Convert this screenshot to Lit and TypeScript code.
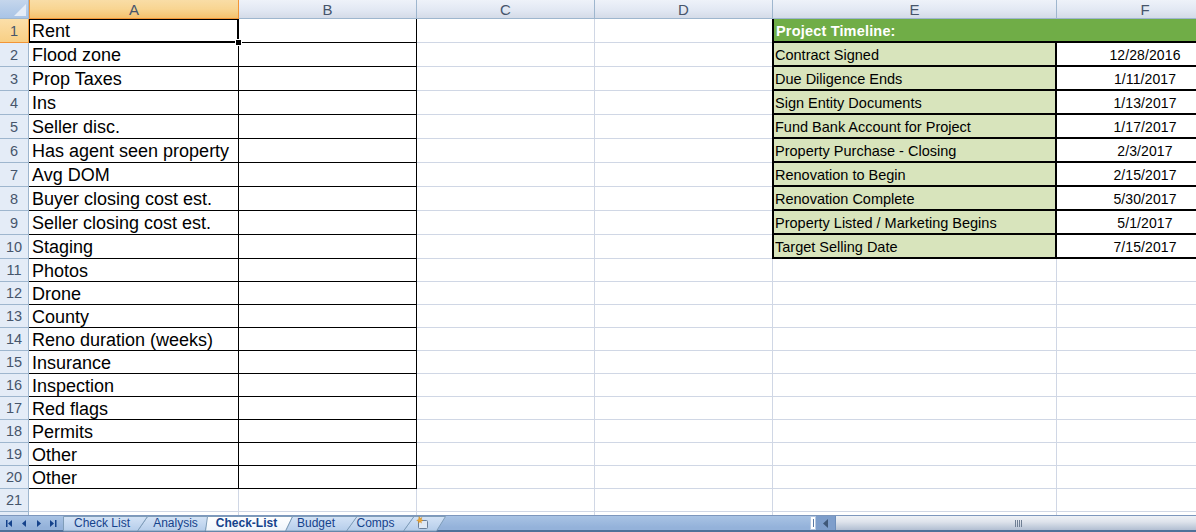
import { LitElement, html, css, svg } from "lit";
import { customElement } from "lit/decorators.js";

const LEFT = ["Rent","Flood zone","Prop Taxes","Ins","Seller disc.","Has agent seen property","Avg DOM","Buyer closing cost est.","Seller closing cost est.","Staging","Photos","Drone","County","Reno duration (weeks)","Insurance","Inspection","Red flags","Permits","Other","Other"];
const TIMELINE: [string,string][] = [["Contract Signed","12/28/2016"],["Due Diligence Ends","1/11/2017"],["Sign Entity Documents","1/13/2017"],["Fund Bank Account for Project","1/17/2017"],["Property Purchase - Closing","2/3/2017"],["Renovation to Begin","2/15/2017"],["Renovation Complete","5/30/2017"],["Property Listed / Marketing Begins","5/1/2017"],["Target Selling Date","7/15/2017"]];
const COLS = ["A","B","C","D","E","F"];
const TABS = [
  { label: "Check List", w: 78 },
  { label: "Analysis", w: 69 },
  { label: "Check-List", w: 73, active: true },
  { label: "Budget", w: 66 },
  { label: "Comps", w: 53 },
];

@customElement("app-root")
export class AppRoot extends LitElement {
  static styles = css`
    :host { display: block; width: 1196px; height: 532px; overflow: hidden; background: #fff; font-family: "Liberation Sans", Arial, sans-serif; }
    .sheet { display: grid; grid-template-columns: 29px 210px 178px 178px 178px 284px 177px; grid-template-rows: 19px repeat(10, 24px) repeat(11, 23px) 3px; width: 1234px; height: 515px; overflow: hidden; }
    .c { box-sizing: border-box; border-right: 1px solid #d0d7e5; border-bottom: 1px solid #d0d7e5; overflow: hidden; white-space: nowrap; display: flex; align-items: flex-end; min-width: 0; color: #000; }
    .corner { box-sizing: border-box; background: linear-gradient(#c5d6ec, #a9c4e6); border-right: 1px solid #9eb6ce; border-bottom: 1px solid #9eb6ce; display: flex; align-items: flex-end; justify-content: flex-end; padding: 0 2px 2px 0; }
    .ch { box-sizing: border-box; background: linear-gradient(#eef2f9 0%, #e2e8f3 55%, #d4dbe8 100%); border-right: 1px solid #9eb6ce; border-bottom: 1px solid #9eb6ce; font-size: 15px; color: #46556b; display: flex; align-items: center; justify-content: center; }
    .ch.sel { background: linear-gradient(#f9dda6 0%, #f8d592 50%, #f5c26d 100%); border-right-color: #f29536; border-bottom-color: #f29536; border-left: 1px solid #f29536; }
    .rh { box-sizing: border-box; background: #e4ecf7; border-right: 1px solid #9eb6ce; border-bottom: 1px solid #9eb6ce; font-size: 14.5px; color: #46556b; display: flex; align-items: center; justify-content: center; }
    .rh.sel { background: linear-gradient(#fbdfa9, #f8cf85); border-right-color: #f29536; border-bottom-color: #f29536; }
    .box { border-color: #000; font-size: 18px; padding: 0 0 0 3px; line-height: 21px; }
    .box.tight { line-height: 19px; }
    .active { position: relative; overflow: visible; border: 2px solid #000; border-top-width: 1px; border-left-width: 1px; padding-left: 2px; }
    .handle { position: absolute; right: -5px; bottom: -5px; width: 5px; height: 5px; background: #000; border: 1px solid #fff; z-index: 2; }
    .title { grid-column: span 2; background: #70ad47; color: #fff; font-weight: bold; font-size: 14.5px; letter-spacing: 0.18px; line-height: 20px; padding: 0 0 0 2px; border-left: 2px solid #000; border-bottom: 2px solid #000; border-right: none; margin-left: -1px; }
    .label { background: #d8e4bc; font-size: 14.5px; line-height: 20px; padding: 0 0 0 1px; border-left: 2px solid #000; border-right: 2px solid #000; border-bottom: 2px solid #000; margin-left: -1px; }
    .date { font-size: 14px; letter-spacing: 0.1px; line-height: 20px; justify-content: center; border-right: none; border-bottom: 2px solid #000; padding-right: 1px; }
    .bar { height: 17px; box-sizing: border-box; display: flex; position: relative; background: linear-gradient(#a9c3e4, #94b2da 80%); border-top: 1px solid #7d97bd; border-bottom: 2px solid #4f7199; }
    .strip { position: absolute; left: 0; top: -1px; }
    .nav { width: 63px; flex: none; position: relative; display: flex; align-items: center; padding-left: 5px; box-sizing: border-box; }
    .nav svg { display: block; }
    .tab { flex: none; position: relative; font-size: 12px; color: #15428b; display: flex; align-items: center; justify-content: center; height: 14px; }
    .tab.on { font-weight: bold; }
    .addicon { flex: none; position: relative; width: 14px; margin-left: 13px; }
    .fill { flex: 1; }
    .split { position: relative; flex: none; width: 6px; height: 14px; background: #fff; border: 1px solid #b6c9e2; box-sizing: border-box; display: flex; align-items: center; justify-content: center; }
    .split i { display: block; width: 1px; height: 8px; background: #5a7aa5; }
    .arrow { position: relative; flex: none; width: 19px; height: 14px; background: #7e9ecb; display: flex; align-items: center; justify-content: center; }
    .track { position: relative; flex: none; width: 361px; height: 14px; box-sizing: border-box; border-left: 1px solid #6d8ebb; background: linear-gradient(#eef1f6, #dfe4ec 40%, #b2bfd2); display: flex; align-items: center; justify-content: center; padding-left: 5px; }
    .grip { display: flex; gap: 1px; }
    .grip i { display: block; width: 1px; height: 7px; background: #6f7f94; }
  `;

  private tabStrip() {
    const h = 16;
    const shape = (pts: number[][], fill: string, stroke = "#7f9db9") => svg`<polygon points=${pts.map(p => p.join(",")).join(" ")} fill=${fill} stroke=${stroke} stroke-width="1"></polygon>`;
    const a = "url(#tabg)";
    return html`<svg class="strip" width="460" height="17" viewBox="0 0 460 17">
      <defs><linearGradient id="tabg" x1="0" y1="0" x2="0" y2="1"><stop offset="0" stop-color="#d4e3f6"></stop><stop offset="1" stop-color="#b5cdea"></stop></linearGradient>
      <linearGradient id="tabw" x1="0" y1="0" x2="0" y2="1"><stop offset="0" stop-color="#ffffff"></stop><stop offset="1" stop-color="#eef4fb"></stop></linearGradient></defs>
      ${shape([[403.5,h],[413.5,1.5],[445.5,1.5],[436.5,h]], a)}
      ${shape([[346.5,h],[356.5,1.5],[414,1.5],[403.5,h]], a)}
      ${shape([[285.5,h],[292.5,1.5],[357,1.5],[346.5,h]], a)}
      ${shape([[137.5,h],[147.5,1.5],[210,1.5],[205,h]], a)}
      ${shape([[63.5,h],[63.5,1.5],[147.5,1.5],[137.5,h]], a)}
      ${shape([[205.5,h],[207.5,1.5],[292.5,1.5],[285.5,h]], "url(#tabw)")}
    </svg>`;
  }

  render() {
    return html`
      <div class="sheet">
        <div class="corner"><svg width="12" height="12" viewBox="0 0 12 12"><polygon points="12,0 12,12 0,12" fill="#e6edf7"></polygon></svg></div>
        ${COLS.map((c, i) => html`<div class="ch ${i === 0 ? "sel" : ""}">${c}</div>`)}
        ${Array.from({ length: 21 }, (_, r) => this.row(r))}
        <div class="rh" style="border-bottom:none"></div>
        ${COLS.map(() => html`<div class="c" style="border-bottom:none"></div>`)}
      </div>
      <div class="bar">
        ${this.tabStrip()}
        <div class="nav">
          ${this.navIcon("M1 1h1.5v7H1zM7 1v7L3 4.500z", 15)}
          ${this.navIcon("M6 1v7L2 4.500z", 14)}
          ${this.navIcon("M3 1v7l4-3.500z", 14)}
          ${this.navIcon("M2 1v7l4-3.500zM7 1h1.500v7H7z", 14)}
        </div>
        ${TABS.map(t => html`<div class="tab ${t.active ? "on" : ""}" style="width:${t.w}px">${t.label}</div>`)}
        <div class="addicon"><svg width="14" height="14" viewBox="0 0 14 14"><rect x="3.500" y="4.500" width="9" height="8" rx="1" fill="#dfe8f4" stroke="#6b7f99"></rect><path d="M4 0.500l1 2 2-1-1 2 2 1-2 .6.5 2-1.500-1.400-1.500 1.400.2-2-2-.6 2-1z" fill="#f0a830" stroke="#c97f10" stroke-width=".4"></path></svg></div>
        <div class="fill"></div>
        <div class="split"><i></i></div>
        <div class="arrow"><svg width="6" height="9" viewBox="0 0 6 9"><polygon points="5,0 5,9 0,4.500" fill="#3f5878"></polygon></svg></div>
        <div class="track"><div class="grip"><i></i><i></i><i></i><i></i></div></div>
      </div>`;
  }

  private navIcon(d: string, w: number) {
    return html`<svg width=${w} height="9" viewBox="0 0 ${w} 9"><path d=${d} fill="#15428b"></path></svg>`;
  }

  private row(r: number) {
    const n = r + 1;
    const left = LEFT[r];
    const boxed = r < 20;
    const tight = r === 0 || r >= 10;
    return html`
      <div class="rh ${r === 0 ? "sel" : ""}">${n}</div>
      <div class="c ${boxed ? "box" : ""} ${tight ? "tight" : ""} ${r === 0 ? "active" : ""}">${left ?? ""}${r === 0 ? html`<span class="handle"></span>` : ""}</div>
      <div class="c ${boxed ? "box" : ""}"></div>
      <div class="c"></div>
      <div class="c"></div>
      ${r === 0
        ? html`<div class="c title">Project Timeline:</div>`
        : r <= 9
          ? html`<div class="c label">${TIMELINE[r - 1][0]}</div><div class="c date">${TIMELINE[r - 1][1]}</div>`
          : html`<div class="c"></div><div class="c"></div>`}
    `;
  }
}
